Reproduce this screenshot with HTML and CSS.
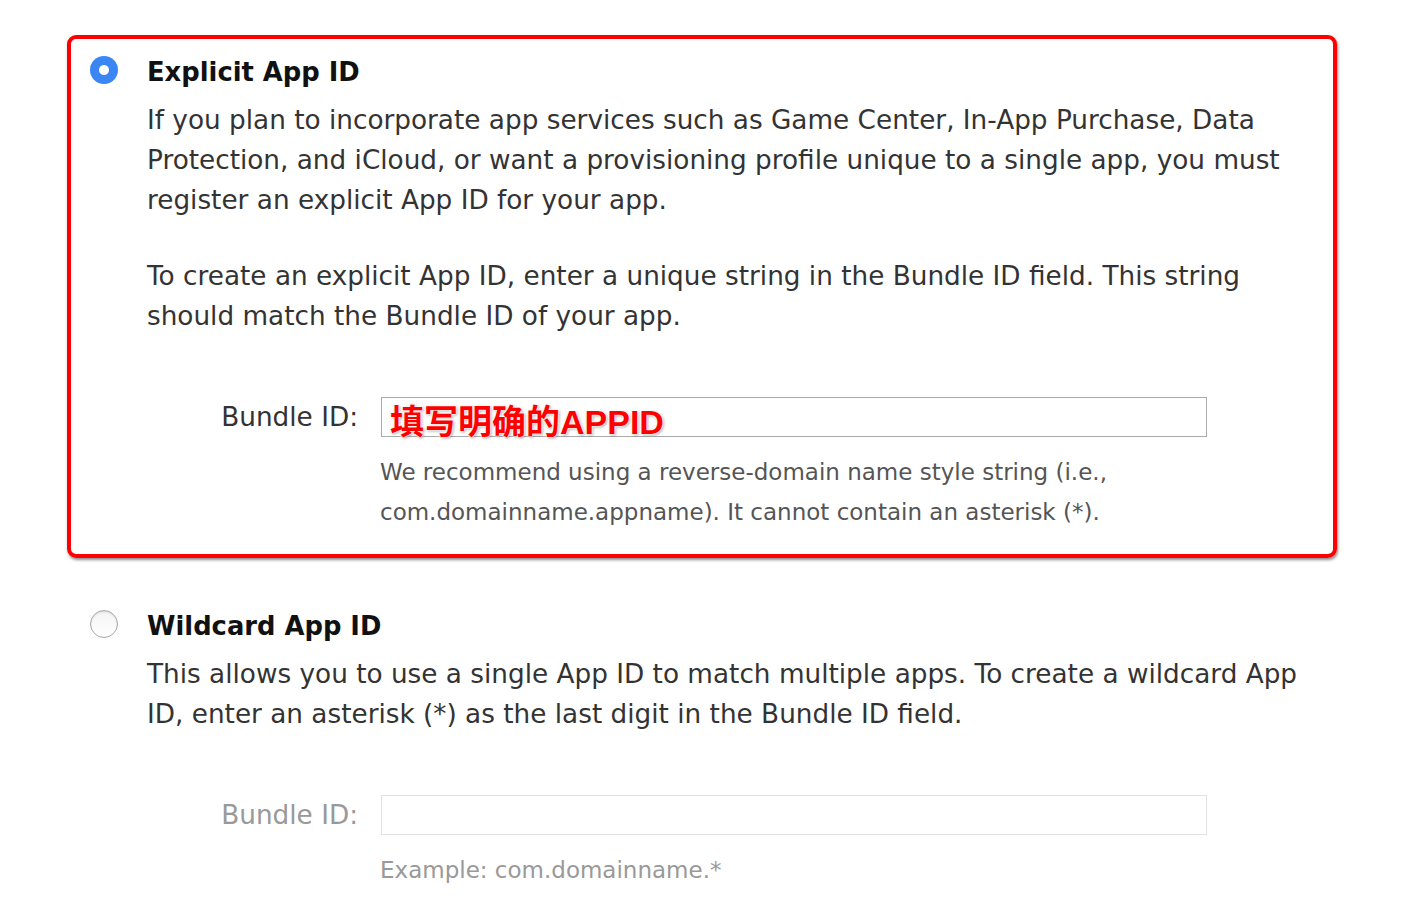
FILE: index.html
```html
<!DOCTYPE html>
<html>
<head>
<meta charset="utf-8">
<link rel="stylesheet" href="styles.css">
</head>
<body>
<div class="page">
  <div class="option selected">
    <div class="radio-col"><span class="radio on"></span></div>
    <div class="content">
      <h2 class="title">Explicit App ID</h2>
      <p class="desc">If you plan to incorporate app services such as Game Center, In-App Purchase, Data Protection, and iCloud, or want a provisioning profile unique to a single app, you must register an explicit App ID for your app.</p>
      <p class="desc">To create an explicit App ID, enter a unique string in the Bundle ID field. This string should match the Bundle ID of your app.</p>
      <div class="field">
        <label class="label">Bundle ID:</label>
        <div class="input strong"><span class="annot">填写明确的APPID</span></div>
      </div>
      <p class="hint">We recommend using a reverse-domain name style string (i.e., com.domainname.appname). It cannot contain an asterisk (*).</p>
    </div>
  </div>
  <div class="option">
    <div class="radio-col"><span class="radio"></span></div>
    <div class="content">
      <h2 class="title">Wildcard App ID</h2>
      <p class="desc">This allows you to use a single App ID to match multiple apps. To create a wildcard App ID, enter an asterisk (*) as the last digit in the Bundle ID field.</p>
      <div class="field">
        <label class="label muted">Bundle ID:</label>
        <div class="input light"></div>
      </div>
      <p class="hint muted">Example: com.domainname.*</p>
    </div>
  </div>
</div>
</body>
</html>
```
FILE: styles.css
```css
html, body { margin: 0; padding: 0; background: #fff; }
body { font-family: "DejaVu Sans", "Open Sans", sans-serif; color: #333; }
.page { padding: 35px 0 0 67px; width: 1270px; }
.option {
  display: flex;
  border: 4px solid transparent;
  border-radius: 9px;
  padding: 13px 0 22px 19px;
  margin-bottom: 31px;
}
.option.selected {
  border-color: #ff0000;
  box-shadow: 1px 2px 3px rgba(0,0,0,0.45);
}
.radio-col { width: 57px; flex: none; padding-top: 4px; }
.radio {
  display: block;
  width: 28px; height: 28px;
  box-sizing: border-box;
  border-radius: 50%;
  border: 1px solid #a8a8a8;
  background: linear-gradient(#f4f4f4, #fff);
  box-shadow: inset 0 1px 2px rgba(0,0,0,0.12);
}
.radio.on {
  border: none;
  box-shadow: none;
  background: radial-gradient(circle, #fff 0 4.5px, #3a86f4 5.5px);
}
.content { flex: 1; }
.title { margin: 0 0 8px; font-size: 25.8px; line-height: 40px; font-weight: 700; color: #111; }
.desc { margin: 0 0 36px; font-size: 26.3px; line-height: 40px; color: #333; }
.field { display: flex; align-items: center; margin-top: 61px; }
.label { width: 211px; text-align: right; font-size: 26.3px; line-height: 40px; color: #333; flex: none; }
.input { margin-left: 23px; width: 826px; height: 40px; box-sizing: border-box; border: 1px solid #aaa; position: relative; }
.input.light { border-color: #e2e2e2; }
.hint { margin: 15px 0 0 233px; font-size: 23px; line-height: 40px; color: #555; }
.muted { color: #999; }
.annot {
  position: absolute; left: 8px; top: 2px;
  font-family: "Liberation Sans", "Noto Sans CJK SC", sans-serif;
  font-weight: 700; font-size: 34px; line-height: 44px; color: #ff0000;
  text-shadow: 0 0 2px #fff, 0 0 2px #fff, 0 0 3px #fff, 1px 1px 3px rgba(0,0,0,0.5);
  white-space: nowrap;
}
```
